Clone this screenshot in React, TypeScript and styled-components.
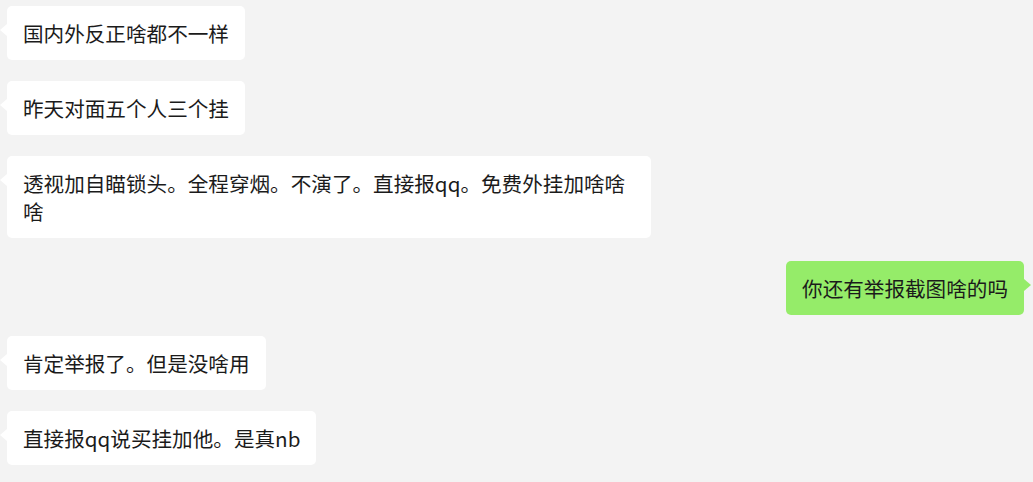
import styled, { createGlobalStyle } from "styled-components";

const GlobalStyle = createGlobalStyle`
  html, body {
    margin: 0;
    padding: 0;
    background: #f3f3f3;
  }
  body {
    width: 1033px;
    height: 482px;
    overflow: hidden;
    font-family: "Noto Sans CJK SC", "Noto Sans", sans-serif;
  }
`;

const ChatList = styled.div`
  display: flex;
  flex-direction: column;
  gap: 21px;
  padding: 6px 9px 0 7px;
`;

const Row = styled.div<{ $mine?: boolean; $extraTop?: number }>`
  display: flex;
  justify-content: ${(p) => (p.$mine ? "flex-end" : "flex-start")};
  margin-top: ${(p) => p.$extraTop || 0}px;
`;

const Bubble = styled.div<{ $mine?: boolean }>`
  position: relative;
  box-sizing: border-box;
  max-width: 644px;
  padding: 13px 16px;
  border-radius: 5px;
  background: ${(p) => (p.$mine ? "#95ec69" : "#ffffff")};
  color: #1b1b1b;
  font-size: 20.6px;
  line-height: 28px;
  word-break: break-all;

  &::before {
    content: "";
    position: absolute;
    top: 18px;
    ${(p) => (p.$mine ? "right: -7px;" : "left: -7px;")}
    border-top: 6px solid transparent;
    border-bottom: 6px solid transparent;
    ${(p) =>
      p.$mine
        ? "border-left: 7px solid #95ec69;"
        : "border-right: 7px solid #ffffff;"}
  }
`;

const messages: Array<{ text: string; mine?: boolean; extraTop?: number }> = [
  { text: "国内外反正啥都不一样" },
  { text: "昨天对面五个人三个挂" },
  { text: "透视加自瞄锁头。全程穿烟。不演了。直接报qq。免费外挂加啥啥啥" },
  { text: "你还有举报截图啥的吗", mine: true, extraTop: 2 },
  { text: "肯定举报了。但是没啥用" },
  { text: "直接报qq说买挂加他。是真nb" },
];

export default function App() {
  return (
    <>
      <GlobalStyle />
      <ChatList>
        {messages.map((m, i) => (
          <Row key={i} $mine={m.mine} $extraTop={m.extraTop}>
            <Bubble $mine={m.mine}>{m.text}</Bubble>
          </Row>
        ))}
      </ChatList>
    </>
  );
}
